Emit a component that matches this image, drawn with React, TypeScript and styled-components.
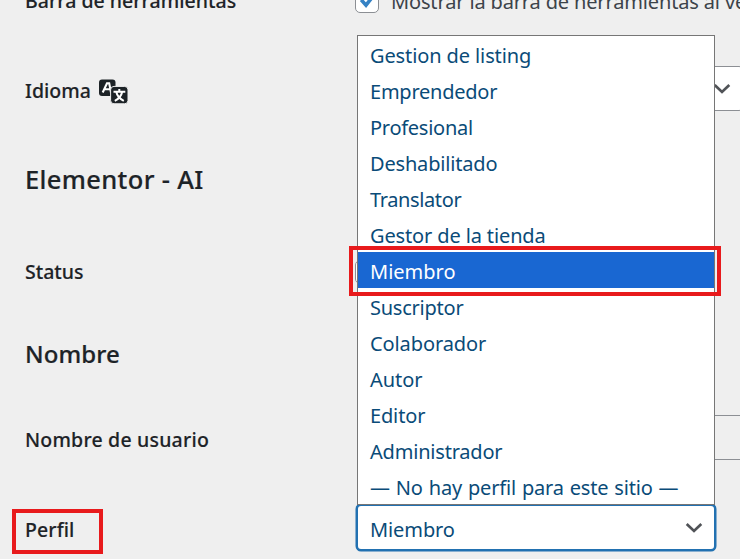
import React from 'react';
import styled, { createGlobalStyle } from 'styled-components';

const GlobalStyle = createGlobalStyle`
  * { box-sizing: border-box; }
  body { margin: 0; background: #efefef; overflow: hidden; }
`;

const Page = styled.main`
  position: relative;
  width: 740px;
  height: 559px;
  overflow: hidden;
  background: #efefef;
  color: #1d2327;
  font-family: 'Noto Sans', 'Open Sans', sans-serif;
  font-size: 20px;
`;

const Form = styled.div`
  display: flex;
  flex-direction: column;
  margin-top: -21px;
`;

const Row = styled.div<{ $height: number; $after?: number }>`
  display: grid;
  grid-template-columns: 331px max-content;
  align-items: center;
  height: ${(p) => p.$height}px;
  margin-bottom: ${(p) => p.$after ?? 0}px;
  padding-left: 25px;
`;

const Text = styled.span<{ $spacing?: number; $words?: number }>`
  letter-spacing: ${(p) => p.$spacing ?? 0}px;
  word-spacing: ${(p) => p.$words ?? 0}px;
  white-space: nowrap;
`;

const Label = styled.div<{ $drop?: number }>`
  display: flex;
  align-items: center;
  gap: 8px;
  padding-top: ${(p) => p.$drop ?? 4}px;
  font-weight: 500;
  font-size: 19.5px;
  line-height: 28px;
  -webkit-text-stroke: 0.15px currentColor;
`;

const Heading = styled.h2<{ $height: number; $size: number }>`
  display: flex;
  align-items: center;
  height: ${(p) => p.$height}px;
  margin: 0;
  padding: 0 0 3px 25px;
  font-size: ${(p) => p.$size}px;
  font-weight: 500;
  -webkit-text-stroke: 0.2px currentColor;
`;

const CheckLabel = styled.label`
  display: flex;
  align-items: center;
  gap: 12px;
  margin-left: -1px;
  color: #3c434a;
`;

const Checkbox = styled.span`
  display: flex;
  align-items: center;
  justify-content: center;
  width: 24px;
  height: 24px;
  border: 1px solid #8c8f94;
  border-radius: 5px;
  background: #fff;
`;

const Select = styled.div<{ $width: number; $focused?: boolean }>`
  display: flex;
  align-items: center;
  justify-content: space-between;
  width: ${(p) => p.$width}px;
  height: ${(p) => (p.$focused ? 47 : 45)}px;
  margin-left: ${(p) => (p.$focused ? 0 : 1)}px;
  padding: 0 ${(p) => (p.$focused ? 11 : 12)}px 0 12px;
  border: ${(p) => (p.$focused ? '2px solid #2271b1' : '1px solid #8c8f94')};
  border-radius: 5px;
  background: #fff;
  box-shadow: ${(p) => (p.$focused ? '0 0 0 0.5px #2271b1' : 'none')};
  color: #0a4b78;
`;

const SelectedValue = styled.span`
  padding-top: 4px;
  letter-spacing: -0.1px;
`;

const TextInput = styled.div`
  width: 525px;
  height: 45px;
  margin-left: 1px;
  border: 1px solid #8c8f94;
  border-radius: 5px;
`;

const Popup = styled.ul`
  position: absolute;
  left: 357px;
  top: 35px;
  width: 358px;
  margin: 0;
  padding: 0;
  border: 1px solid #767676;
  background: #fff;
  list-style: none;
`;

const Option = styled.li<{ $active: boolean }>`
  display: flex;
  align-items: center;
  height: 36px;
  padding: 3px 0 0 12px;
  line-height: 33px;
  background: ${(p) => (p.$active ? '#1967d2' : 'transparent')};
  color: ${(p) => (p.$active ? '#fff' : '#0a4b78')};
`;

const Marker = styled.div<{ $x: number; $y: number; $w: number; $h: number }>`
  position: absolute;
  left: ${(p) => p.$x}px;
  top: ${(p) => p.$y}px;
  width: ${(p) => p.$w}px;
  height: ${(p) => p.$h}px;
  border: 4px solid #e81a1c;
`;

const Chevron = () => (
  <svg width="18" height="12" viewBox="0 0 18 12" fill="none">
    <path d="M1.7 2l7.3 7 7.3-7" stroke="#505357" strokeWidth="2.7" />
  </svg>
);

const TranslateIcon = () => (
  <svg width="30" height="26" viewBox="0 0 30 26" fill="none">
    <rect x="0" y="1.5" width="16.5" height="16.5" rx="3" fill="#1d2327" />
    <path d="M3.7 14.5 8 5.3h2.2L12 14.5M5.6 11.3h5.6" stroke="#fff" strokeWidth="2.1" />
    <rect x="11.6" y="8.4" width="17.4" height="17.4" rx="3.4" fill="#1d2327" stroke="#efefef" />
    <path d="M14.5 13.8h11.8M20.3 11v2.8M15.8 22.8c3.8-1.8 6.5-4.6 7.3-8.8M17.3 14c.9 4 3.5 6.9 7.5 8.8" stroke="#fff" strokeWidth="2" />
  </svg>
);

const options = [
  { name: 'Gestion de listing', spacing: -0.11 },
  { name: 'Emprendedor', spacing: -0.24 },
  { name: 'Profesional', spacing: -0.27 },
  { name: 'Deshabilitado', spacing: -0.18 },
  { name: 'Translator', spacing: -0.38 },
  { name: 'Gestor de la tienda', spacing: -0.13 },
  { name: 'Miembro', spacing: 0 },
  { name: 'Suscriptor', spacing: -0.24 },
  { name: 'Colaborador', spacing: -0.1 },
  { name: 'Autor', spacing: -0.05 },
  { name: 'Editor', spacing: -0.15 },
  { name: 'Administrador', spacing: -0.2 },
  { name: '— No hay perfil para este sitio —', spacing: -0.19, words: 1 },
];

export default function App() {
  return (
    <Page>
      <GlobalStyle />
      <Form>
        <Row $height={44} $after={43}>
          <Label $drop={0}><Text $spacing={0.03}>Barra de herramientas</Text></Label>
          <CheckLabel>
            <Checkbox>
              <svg width="16" height="16" viewBox="0 0 16 16" fill="none">
                <path d="M2.2 6.8 7 12.2 13.8 3.5" stroke="#3582c4" strokeWidth="3.6" />
              </svg>
            </Checkbox>
            <Text $spacing={-0.15}>Mostrar la barra de herramientas al ver el sitio</Text>
          </CheckLabel>
        </Row>
        <Row $height={45}>
          <Label><Text>Idioma</Text><TranslateIcon /></Label>
          <Select $width={387}><span /><Chevron /></Select>
        </Row>
        <Heading $height={138} $size={25.5}><Text $spacing={0.35}>Elementor - AI</Text></Heading>
        <Row $height={46}>
          <Label $drop={0}><Text>Status</Text></Label>
          <CheckLabel><Checkbox /></CheckLabel>
        </Row>
        <Heading $height={120} $size={24}><Text $spacing={0.1}>Nombre</Text></Heading>
        <Row $height={45} $after={44}>
          <Label><Text $spacing={0.2}>Nombre de usuario</Text></Label>
          <TextInput />
        </Row>
        <Row $height={47}>
          <Label><Text $spacing={0.1}>Perfil</Text></Label>
          <Select $width={360} $focused><SelectedValue>Miembro</SelectedValue><Chevron /></Select>
        </Row>
      </Form>
      <Popup>
        {options.map((o) => (
          <Option key={o.name} $active={o.name === 'Miembro'}>
            <Text $spacing={o.spacing} $words={o.words}>{o.name}</Text>
          </Option>
        ))}
      </Popup>
      <Marker $x={349} $y={246} $w={372} $h={50} />
      <Marker $x={12} $y={509} $w={91} $h={45} />
    </Page>
  );
}
